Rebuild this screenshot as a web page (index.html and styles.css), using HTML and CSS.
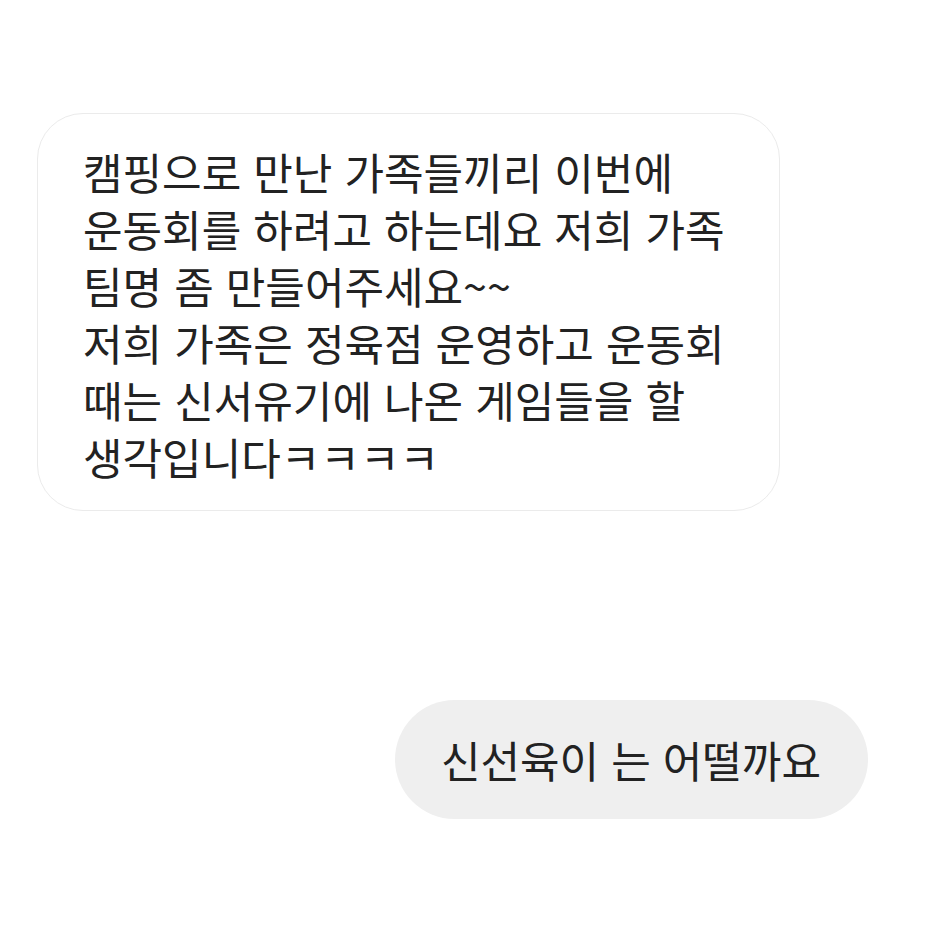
FILE: index.html
```html
<!DOCTYPE html>
<html lang="ko">
<head>
    <meta charset="UTF-8">
    <meta name="viewport" content="width=device-width, initial-scale=1.0">
    <title>채팅</title>
    <link rel="stylesheet" href="styles.css">
</head>
<body>
    <main class="chat">
        <div class="bubble received">
            캠핑으로 만난 가족들끼리 이번에<br>
            운동회를 하려고 하는데요 저희 가족<br>
            팀명 좀 만들어주세요~~<br>
            저희 가족은 정육점 운영하고 운동회<br>
            때는 신서유기에 나온 게임들을 할<br>
            생각입니다ㅋㅋㅋㅋ
        </div>
        <div class="bubble sent">신선육이 는 어떨까요</div>
    </main>
</body>
</html>
```

FILE: styles.css
```css
*{
    box-sizing: border-box;
    padding: 0px;
    margin: 0px;
}

html{
    font-family: "Noto Sans CJK KR", "Noto Sans", sans-serif;
}

body{
    background-color: white;
    color: #222222;
    width: 932px;
    height: 932px;
}

.chat{
    display: flex;
    flex-direction: column;
    padding: 113px 64px 0 37px;
}

.bubble{
    font-size: 43px;
    line-height: 57px;
    white-space: nowrap;
}

.received{
    align-self: flex-start;
    width: 743px;
    padding: 29px 46px 25px 45px;
    background-color: white;
    border: solid #ebebeb 1px;
    border-radius: 46px;
}

.sent{
    align-self: flex-end;
    margin-top: 189px;
    height: 119px;
    display: flex;
    align-items: center;
    padding: 0 47px 0 46px;
    background-color: #efefef;
    border-radius: 60px;
}
```
